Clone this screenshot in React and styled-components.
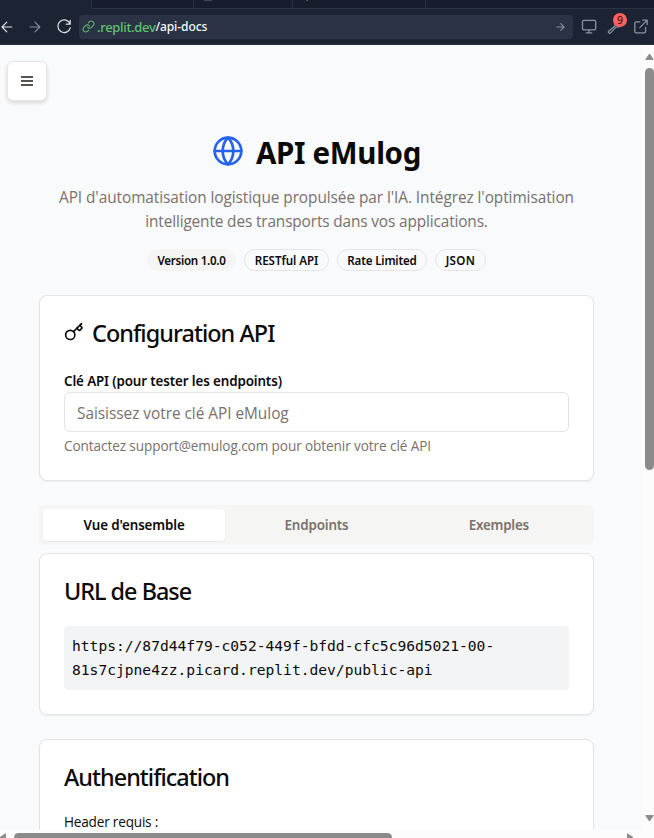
import React from 'react';
import styled, { createGlobalStyle } from 'styled-components';
import { Globe, Key } from 'lucide-react';

const GlobalStyle = createGlobalStyle`
  *, *::before, *::after { box-sizing: border-box; }
  body { margin: 0; background: #f9fafc; }
  h1, h2, p { margin: 0; }
`;

const Window = styled.div`
  width: 654px;
  height: 838px;
  overflow: hidden;
  display: flex;
  flex-direction: column;
  font-family: 'Open Sans', 'Noto Sans', sans-serif;
  color: #0c0a09;
`;

const TabStrip = styled.div`
  flex: none;
  height: 9px;
  display: flex;
  background: #1c2333;
  padding-left: 91px;
`;

const BrowserTab = styled.div`
  width: ${(p) => p.$width};
  flex: ${(p) => (p.$width ? 'none' : '1')};
  background: #171d2d;
  border-left: 1px solid #2b3245;
  border-bottom: 1px solid #2b3245;
  padding-left: ${(p) => p.$inset || 0};
`;

const TabMark = styled.div`
  width: ${(p) => p.$width};
  height: 1px;
  background: ${(p) => p.$color};
`;

const Toolbar = styled.div`
  flex: none;
  height: 36px;
  display: flex;
  align-items: center;
  background: #1c2333;
  border-bottom: 1px solid #2b3245;
`;

const NavButtons = styled.div`
  display: flex;
  align-items: center;
  width: 79px;
  gap: 14px;
`;

const Glyph = styled.svg`
  display: block;
  flex: none;
  fill: none;
  stroke: ${(p) => p.$color};
  stroke-width: ${(p) => p.$weight || 1.2};
  stroke-linecap: round;
  stroke-linejoin: round;
`;

const AddressBar = styled.div`
  width: 494px;
  height: 24px;
  display: flex;
  align-items: center;
  gap: 2px;
  padding: 0 7px 0 3px;
  border-radius: 4px;
  background: #2b3245;
`;

const Host = styled.span`
  font: 500 13px/24px 'Noto Sans', sans-serif;
  letter-spacing: -0.32px;
  color: #5fc46d;
`;

const Path = styled.span`
  flex: 1;
  margin-left: -2px;
  font: 500 12px/24px 'Noto Sans', sans-serif;
  letter-spacing: -0.08px;
  color: #f5f9fc;
`;

const Tools = styled.div`
  display: flex;
  align-items: center;
  gap: 10px;
  padding-left: 8px;
`;

const ToolSlot = styled.div`
  position: relative;
`;

const Counter = styled.span`
  position: absolute;
  left: 6px;
  top: -6px;
  width: 14px;
  height: 14px;
  border-radius: 50%;
  background: #ff6161;
  color: #4a1216;
  font: 500 10.5px/14px 'Noto Sans', sans-serif;
  text-align: center;
`;

const Frame = styled.div`
  flex: 1;
  min-height: 0;
  display: grid;
  grid-template-columns: 642px 12px;
  grid-template-rows: 785px 8px;
`;

const Page = styled.main`
  position: relative;
  overflow: hidden;
  background: #f9fafc;
  padding: 88px 48px 0 39px;
`;

const MenuButton = styled.button`
  position: absolute;
  left: 7px;
  top: 16px;
  width: 40px;
  height: 40px;
  padding: 14px 13px;
  display: flex;
  flex-direction: column;
  gap: 2px;
  background: #fff;
  border: 1px solid #e7e5e4;
  border-radius: 6px;
  box-shadow: 0 2px 4px rgba(0, 0, 0, 0.14);
`;

const MenuBar = styled.span`
  flex: none;
  width: 12px;
  height: 2px;
  background: #57534e;
`;

const Hero = styled.header`
  height: 162px;
  display: flex;
  flex-direction: column;
  align-items: center;
`;

const HeroTitle = styled.div`
  height: 36px;
  display: flex;
  align-items: center;
  gap: 12px;
  margin-bottom: 17px;

  svg { color: #2563eb; }
`;

const Heading = styled.h1`
  font: 700 29.5px/36px 'Noto Sans', sans-serif;
  padding-top: 3px;
  letter-spacing: -0.33px;
`;

const Lead = styled.p`
  font-size: 15.4px;
  line-height: 24px;
  letter-spacing: ${(p) => p.$tracking};
  color: #78716c;
  white-space: nowrap;
`;

const Badges = styled.div`
  display: flex;
  gap: 8px;
  margin-top: 15px;
`;

const Badge = styled.span`
  width: ${(p) => p.$width};
  height: 22px;
  border: 1px solid ${(p) => (p.$filled ? 'transparent' : '#e7e5e4')};
  border-radius: 11px;
  background: ${(p) => (p.$filled ? '#f5f5f4' : 'transparent')};
  font: 560 11.6px/21px 'Noto Sans', sans-serif;
  letter-spacing: ${(p) => p.$tracking};
  text-align: center;
  white-space: nowrap;
`;

const Card = styled.section`
  padding: 24px;
  height: ${(p) => p.$height};
  margin-bottom: 24px;
  background: #fff;
  border: 1px solid #e4e4e7;
  border-radius: 8px;
  box-shadow: 0 1px 2px rgba(0, 0, 0, 0.05);
`;

const CardTitle = styled.h2`
  display: flex;
  gap: 8px;
  height: 24px;
  margin-bottom: 24px;
  font: 540 23.4px/26px 'Noto Sans', sans-serif;
  letter-spacing: ${(p) => p.$tracking};
  white-space: nowrap;

  svg { margin-top: 2px; }
`;

const Field = styled.div`
  display: flex;
  flex-direction: column;
`;

const Label = styled.label`
  font: 580 13.4px/27px 'Noto Sans', sans-serif;
  height: 24px;
  letter-spacing: -0.13px;
`;

const Input = styled.input`
  width: 100%;
  height: 40px;
  padding: 2px 12px 0;
  border: 1px solid #e4e4e7;
  border-radius: 6px;
  background: #fff;
  font: 400 15.4px 'Open Sans', sans-serif;
  letter-spacing: -0.03px;

  &::placeholder { color: #78716c; opacity: 1; }
`;

const Note = styled.p`
  font-size: 13.6px;
  line-height: 20px;
  margin-top: ${(p) => p.$gap || 0};
  letter-spacing: ${(p) => p.$tracking};
  color: ${(p) => p.$color || 'inherit'};
`;

const Tabs = styled.div`
  display: grid;
  grid-template-columns: repeat(3, 1fr);
  height: 40px;
  padding: 4px;
  margin-bottom: 8px;
  border-radius: 6px;
  background: #f5f5f4;
`;

const Tab = styled.button`
  border: 0;
  padding: 0;
  border-radius: 4px;
  background: ${(p) => (p.$active ? '#fff' : 'transparent')};
  box-shadow: ${(p) => (p.$active ? '0 1px 2px rgba(0, 0, 0, 0.06)' : 'none')};
  color: ${(p) => (p.$active ? '#0c0a09' : '#78716c')};
  font: 580 13.4px/32px 'Noto Sans', sans-serif;
  letter-spacing: ${(p) => p.$tracking};
`;

const CodeBlock = styled.div`
  height: 64px;
  padding: 8px;
  border-radius: 4px;
  background: #f3f4f6;
  font: 14.62px/24px 'DejaVu Sans Mono', monospace;
  white-space: pre-line;
`;

const Track = styled.div`
  display: flex;
  flex-direction: ${(p) => (p.$vertical ? 'column' : 'row')};
  background: #fcfcfc;
  overflow: hidden;
  padding: ${(p) => (p.$vertical ? '8px 0 7px 3px' : '3px 0 0 0')};
`;

const Thumb = styled.div`
  flex: none;
  width: ${(p) => p.$width};
  height: ${(p) => p.$height};
  margin: ${(p) => p.$margin};
  border-radius: 4.5px;
  background: #8b8b8b;
`;

const Arrow = styled.svg`
  display: block;
  flex: none;
  fill: #8b8b8b;
  stroke: #8b8b8b;
  stroke-linejoin: round;
`;

const Corner = styled.div`
  background: #fcfcfc;
`;

export default function App() {
  return (
    <Window>
      <GlobalStyle />
      <TabStrip>
        <BrowserTab $width="102px" />
        <BrowserTab $width="99px" $inset="10px"><TabMark $width="8px" $color="#3c4457" /></BrowserTab>
        <BrowserTab $width="133px" $inset="13px"><TabMark $width="2px" $color="#2f6b45" /></BrowserTab>
        <BrowserTab />
      </TabStrip>

      <Toolbar>
        <NavButtons>
          <Glyph width="14" height="14" viewBox="0 0 14 14" $color="#dfe3ea"><path d="M11.8 7H2M6.8 2.2 2 7l4.8 4.8" /></Glyph>
          <Glyph width="14" height="14" viewBox="0 0 14 14" $color="#868d9b"><path d="M2 7h9.7M7 2.2 11.8 7 7 11.8" /></Glyph>
          <Glyph width="15" height="15" viewBox="0 0 15 15" $color="#dfe3ea"><path d="M14.2 1.3v3.9h-3.9M14.1 5A6.3 6.3 0 1 0 14.3 8.8" /></Glyph>
        </NavButtons>
        <AddressBar>
          <Glyph width="13" height="13" viewBox="0 0 24 24" $color="#5fb36d" $weight="2">
            <path d="M10 13a5 5 0 0 0 7.54.54l3-3a5 5 0 0 0-7.07-7.07l-1.72 1.71" />
            <path d="M14 11a5 5 0 0 0-7.54-.54l-3 3a5 5 0 0 0 7.07 7.07l1.71-1.71" />
          </Glyph>
          <Host>.replit.dev</Host>
          <Path>/api-docs</Path>
          <Glyph width="10" height="10" viewBox="0 0 10 10" $color="#868d9b" $weight="1.1"><path d="M1 5h7M4.7 1.6 8.1 5 4.7 8.4" /></Glyph>
        </AddressBar>
        <Tools>
          <Glyph width="16" height="15" viewBox="0 0 16 15" $color="#8b93a1" $weight="1.3">
            <rect x="1.5" y="1.3" width="13.2" height="9.6" rx="1.4" />
            <path d="M8 11v2.8M5.3 13.8h5.5" />
          </Glyph>
          <ToolSlot>
            <Glyph width="16" height="15" viewBox="0 0 16 15" $color="#8b93a1" $weight="1.2">
              <path d="M9.6 2.6a3.5 3.5 0 0 0-1.4 4.2L1.8 12a1.2 1.2 0 0 0 1.8 1.8l5.6-6a3.6 3.6 0 0 0 4.4-1.7" />
            </Glyph>
            <Counter>9</Counter>
          </ToolSlot>
          <Glyph width="15" height="15" viewBox="0 0 15 15" $color="#8b93a1" $weight="1.3">
            <path d="M6.8 2.8H3.2a1.4 1.4 0 0 0-1.4 1.4v8.2a1.4 1.4 0 0 0 1.4 1.4h8a1.4 1.4 0 0 0 1.4-1.4V8.4M9.8 1.2h4.4v4.4M14 1.4 6.8 8.6" />
          </Glyph>
        </Tools>
      </Toolbar>

      <Frame>
        <Page>
          <MenuButton aria-label="Menu"><MenuBar /><MenuBar /><MenuBar /></MenuButton>
          <Hero>
            <HeroTitle>
              <Globe size={32} />
              <Heading>API eMulog</Heading>
            </HeroTitle>
            <Lead $tracking="-0.07px">API d'automatisation logistique propulsée par l'IA. Intégrez l'optimisation</Lead>
            <Lead $tracking="-0.14px">intelligente des transports dans vos applications.</Lead>
            <Badges>
              <Badge $filled $width="89px" $tracking="-0.27px">Version 1.0.0</Badge>
              <Badge $width="85px" $tracking="-0.07px">RESTful API</Badge>
              <Badge $width="90px" $tracking="-0.18px">Rate Limited</Badge>
              <Badge $width="51px" $tracking="0.35px">JSON</Badge>
            </Badges>
          </Hero>

          <Card $height="186px">
            <CardTitle $tracking="-0.95px"><Key size={20} />Configuration API</CardTitle>
            <Field>
              <Label htmlFor="api-key">Clé API (pour tester les endpoints)</Label>
              <Input id="api-key" placeholder="Saisissez votre clé API eMulog" />
              <Note $gap="4px" $tracking="-0.1px" $color="#78716c">Contactez support@emulog.com pour obtenir votre clé API</Note>
            </Field>
          </Card>

          <Tabs>
            <Tab $active $tracking="-0.12px">Vue d'ensemble</Tab>
            <Tab $tracking="-0.15px">Endpoints</Tab>
            <Tab $tracking="-0.22px">Exemples</Tab>
          </Tabs>

          <Card $height="162px">
            <CardTitle $tracking="-1px">URL de Base</CardTitle>
            <CodeBlock>{'https://87d44f79-c052-449f-bfdd-cfc5c96d5021-00-\n81s7cjpne4zz.picard.replit.dev/public-api'}</CodeBlock>
          </Card>

          <Card $height="162px">
            <CardTitle $tracking="-0.98px">Authentification</CardTitle>
            <Note $tracking="-0.2px">Header requis :</Note>
          </Card>
        </Page>

        <Track $vertical>
          <Arrow width="9" height="7" viewBox="0 0 9 7"><path d="M4.5 1 8.2 6.4H.8Z" /></Arrow>
          <Thumb $width="9px" $height="402px" $margin="8px 0 345px" />
          <Arrow width="9" height="7" viewBox="0 0 9 7"><path d="M4.5 6 8.2.6H.8Z" /></Arrow>
        </Track>
        <Track>
          <Arrow width="6" height="9" viewBox="0 0 6 9"><path d="M0 4.5 5.5.8v7.4Z" /></Arrow>
          <Thumb $width="378px" $height="9px" $margin="0 235px 0 8px" />
          <Arrow width="7" height="9" viewBox="0 0 7 9"><path d="M6 4.5.5.8v7.4Z" /></Arrow>
        </Track>
        <Corner />
      </Frame>
    </Window>
  );
}
